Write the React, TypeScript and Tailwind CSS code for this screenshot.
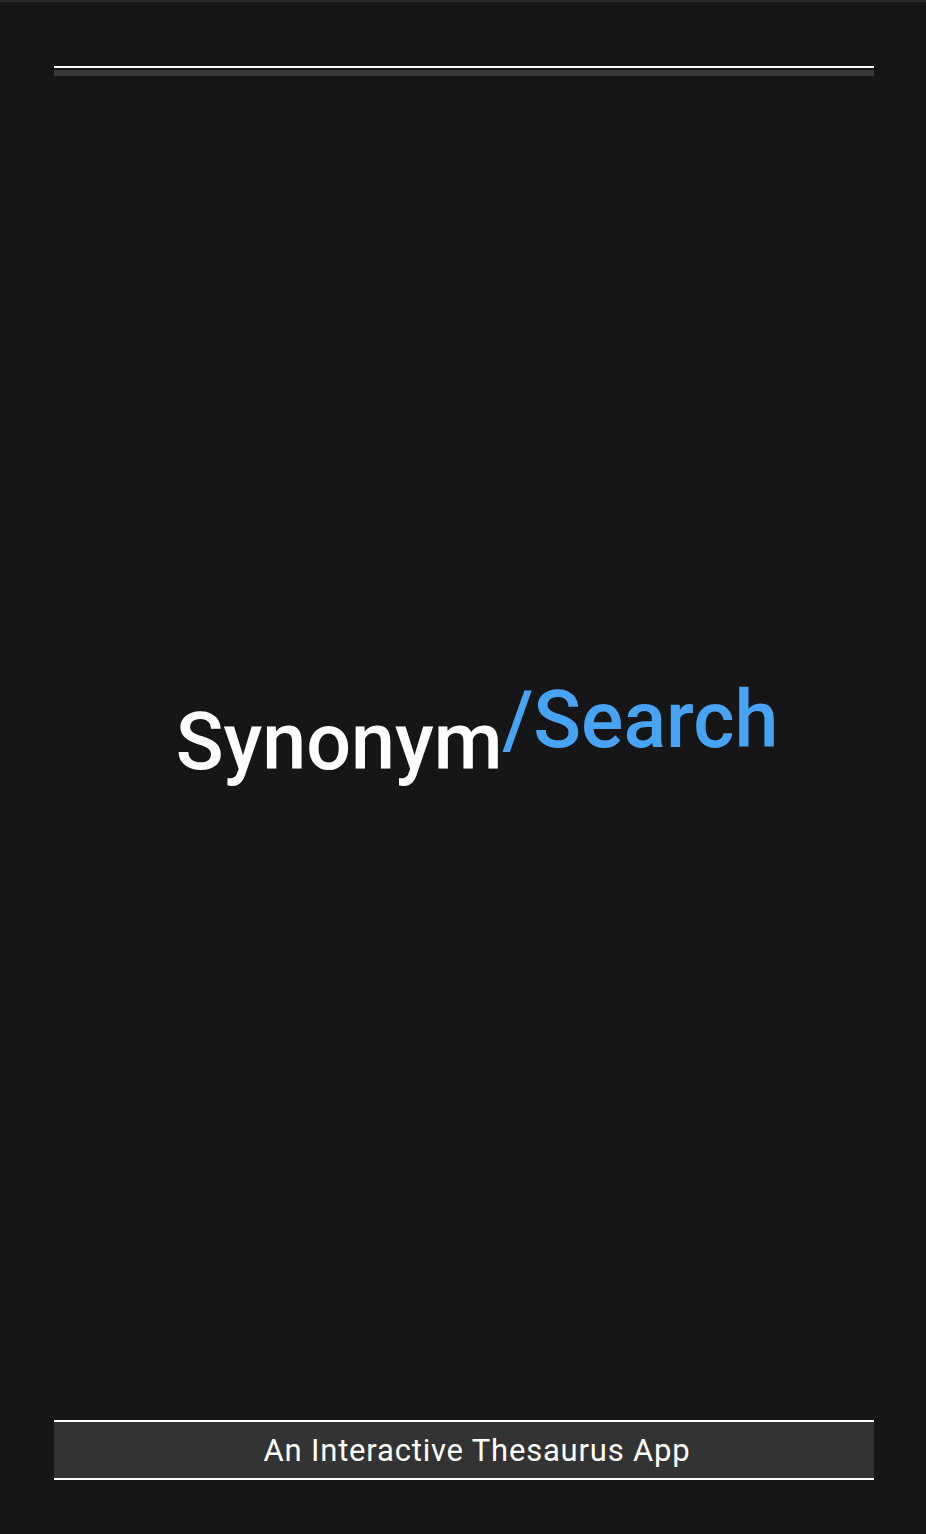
export default function App() {
    return (
        <div
            className="flex flex-col h-[1534px] w-full bg-[#161616] border-t-2 border-[#2a2a2a] pl-[54px] pr-[52px] pb-[54px]"
            style={{ fontFamily: 'Roboto, "Liberation Sans", Arial, sans-serif' }}
        >
            {/* top bar */}
            <div className="mt-[64px] flex flex-col">
                <div className="h-[2px] bg-white" />
                <div className="h-[6px] mt-[2px] bg-[#383838]" />
            </div>

            {/* title */}
            <div className="flex-1 flex items-center justify-center pl-[26px] pb-[34px]">
                <h1 className="text-[79px] leading-none font-medium text-white whitespace-nowrap">
                    Synonym
                    <span className="text-[#47a3f3] align-[22px]">/Search</span>
                </h1>
            </div>

            {/* footer */}
            <div className="h-[60px] flex items-center justify-center pl-[26px] bg-[#333333] border-y-2 border-white">
                <p className="text-[31px] tracking-[0.8px] text-white leading-none">An Interactive Thesaurus App</p>
            </div>
        </div>
    );
}
